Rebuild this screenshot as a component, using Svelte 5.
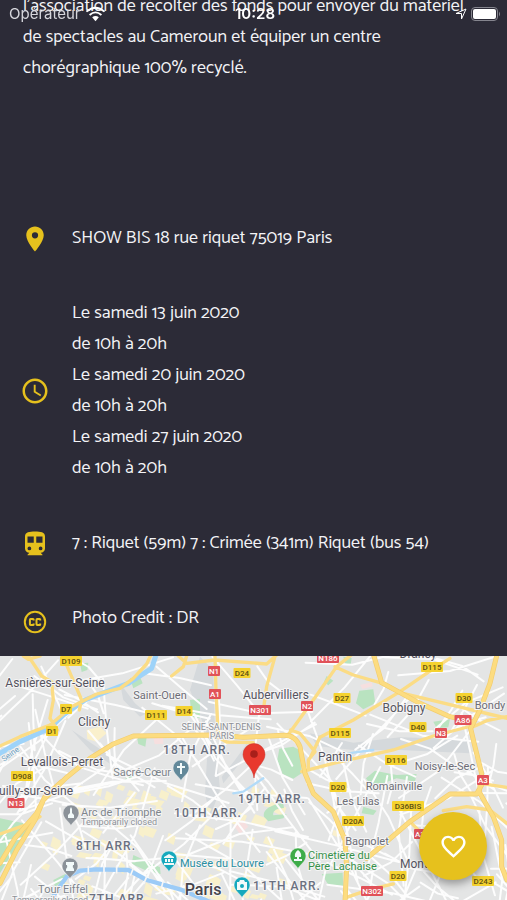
<script>
  const description =
    "l'association de récolter des fonds pour envoyer du matériel de spectacles au Cameroun et équiper un centre chorégraphique 100% recyclé.";

  const dates = ['Le samedi 13 juin 2020', 'Le samedi 20 juin 2020', 'Le samedi 27 juin 2020'];

  let liked = $state(false);

  // Minor streets: a repeatable scatter of long, slightly bent lines.
  function makeStreets(count) {
    let seed = 41;
    const rand = () => {
      seed = (seed * 16807) % 2147483647;
      return seed / 2147483647;
    };
    const list = [];
    for (let i = 0; i < count; i++) {
      const x = rand() * 1521;
      const y = rand() * 750;
      const dense = x < 1000 && y > 260;
      const angle = rand() * Math.PI;
      const len = dense ? 60 + rand() * 150 : 50 + rand() * 120;
      const bend = (rand() - 0.5) * 0.7;
      const mx = x + Math.cos(angle) * len;
      const my = y + Math.sin(angle) * len;
      const ex = mx + Math.cos(angle + bend) * len;
      const ey = my + Math.sin(angle + bend) * len;
      list.push(`M${x.toFixed()} ${y.toFixed()}L${mx.toFixed()} ${my.toFixed()}L${ex.toFixed()} ${ey.toFixed()}`);
    }
    return list.join('');
  }

  function makeBlocks(count) {
    let seed = 977;
    const rand = () => {
      seed = (seed * 16807) % 2147483647;
      return seed / 2147483647;
    };
    return Array.from({ length: count }, () => {
      const x = 120 + rand() * 720;
      const y = 400 + rand() * 340;
      const w = 12 + rand() * 28;
      const h = 10 + rand() * 20;
      return `M${x.toFixed()} ${y.toFixed()}l${w.toFixed()} ${(h / 2).toFixed()}l${(-w / 3).toFixed()} ${h.toFixed()}l${(-w).toFixed()} ${(-h / 2).toFixed()}z`;
    }).join('');
  }

  const streets = makeStreets(230);
  const blocks = makeBlocks(100);

  const parks = [
    'M0 505L50 515L95 525L60 580L30 620L0 670Z',
    'M838 296L880 290L898 300L905 370L880 386L848 372L832 330Z',
    'M400 615L480 652L482 672L440 662L395 642Z',
    'M792 500Q785 470 850 458L852 474Q815 476 820 496L860 492L850 505L805 514Z',
    'M965 672L1028 668L1030 708L985 704Z',
    'M1078 122L1120 118L1126 160L1090 178L1068 160Z',
    'M390 85L420 80L428 100L400 115Z',
    'M570 150L600 146L600 205L575 200Z',
    'M1098 385L1125 362L1190 375L1250 372L1245 395L1190 385L1150 400L1110 402Z',
    'M1030 20L1055 24L1052 46L1035 40Z',
    'M980 78L1000 92L985 106L972 95Z',
    'M410 258L440 262L436 290L415 282Z',
    'M240 40L265 38L262 60L245 66Z',
    'M1300 215L1350 208L1345 232L1310 234Z',
    'M1090 470L1130 482L1120 495L1085 490Z',
    'M160 690L200 670L195 690L165 710Z',
    'M380 372L400 376L392 396L376 390Z'
  ];

  const yards = [
    'M600 20L640 60L645 250L660 420L630 500L615 430L625 260L570 120Z',
    'M930 250L1060 278L1200 262L1400 268L1410 310L1200 300L1060 300L950 288Z',
    'M360 100L405 160L440 190L420 200L370 150Z',
    'M745 275L720 340L670 400L665 380L705 330Z',
    'M215 240L290 290L345 330L335 345L270 300Z'
  ];

  const roads = [
    'M0 288L60 260L150 225L215 170L290 132L360 115L400 85L440 42L455 10',
    'M85 18L125 78L155 96L160 150L150 205L172 240',
    'M188 18L215 80L245 150L238 180',
    'M120 18L85 28L70 18',
    'M535 18L560 40L645 30L800 42L830 15',
    'M515 78L550 50L560 18',
    'M825 20L800 110L790 180',
    'M645 18L648 120L655 262L680 276L760 278',
    'M1060 10L1010 50L940 150L868 250',
    'M1005 50L1060 75L1140 98',
    'M1350 25L1280 70L1200 125L1060 210L960 262L930 325',
    'M1140 98L1200 128L1521 205',
    'M1410 235L1460 212L1521 200',
    'M905 365L1000 340L1180 300L1300 258L1415 228',
    'M872 240L900 250L945 305L925 330L925 360',
    'M1230 515L1290 575',
    'M0 552L90 520L120 500',
    'M1330 482L1400 470L1470 480L1521 520',
    'M1040 742L1110 718L1180 702',
    'M1440 400L1521 412'
  ];

  const highways = [
    'M0 700L50 600L105 510L130 450L200 382L270 325L340 282L400 258L640 255L730 262L850 256Q885 254 900 290L915 370L940 430L1000 485L1035 570L1040 650L1035 760',
    'M0 640L45 565L110 490L135 440L185 395',
    'M1122 18L1145 98L1250 155L1350 200L1415 215',
    'M1492 10L1470 100L1440 180L1412 235L1425 290L1445 370L1438 425',
    'M1445 405L1430 432L1350 432L1230 515L1130 600L1100 625',
    'M1440 430L1480 500L1505 570L1505 650L1521 690'
  ];

  // Text, centre x, centre y, kind of road.
  const shields = [
    ['D109', 71, 5, 'd'], ['D7', 66, 53, 'd'], ['D1', 52, 75, 'd'], ['D908', 22, 120, 'd'],
    ['D24', 242, 17, 'd'], ['D111', 156, 59, 'd'], ['D14', 184, 55, 'd'],
    ['N1', 214, 15, 'n'], ['A1', 215, 38, 'n'], ['N301', 260, 54, 'n'], ['N2', 307, 50, 'n'],
    ['N186', 328, 2, 'n'], ['D27', 342, 42, 'd'], ['D115', 432, 11, 'd'], ['D30', 464, 42, 'd'],
    ['A86', 463, 64, 'n'], ['D40', 418, 71, 'd'], ['N3', 441, 77, 'n'], ['D115', 340, 77, 'd'],
    ['D116', 396, 104, 'd'], ['A3', 483, 124, 'n'], ['D20', 338, 131, 'd'], ['D36BIS', 408, 150, 'd'],
    ['D20A', 353, 165, 'd'], ['A3', 420, 178, 'n'], ['N13', 16, 147, 'n'], ['D20', 398, 220, 'd'],
    ['D243', 483, 225, 'd'], ['N302', 372, 235, 'n']
  ];

  // Text, x, baseline, style, anchor.
  const labels = [
    ['Asnières-sur-Seine', 55, 31, 'town', 'middle'],
    ['Clichy', 94, 70, 'town', 'middle'],
    ['Levallois-Perret', 62, 110, 'town', 'middle'],
    ['Neuilly-sur-Seine', 73, 139, 'town', 'end'],
    ['Aubervilliers', 276, 43, 'town', 'middle'],
    ['Bobigny', 404, 56, 'town', 'middle'],
    ['Pantin', 335, 105, 'town', 'middle'],
    ['Drancy', 418, 2, 'town', 'middle'],
    ['Montreuil', 400, 212, 'town', 'start'],
    ['Saint-Ouen', 160, 43, 'small', 'middle'],
    ['Bondy', 490, 53, 'small', 'middle'],
    ['Noisy-le-Sec', 445, 114, 'small', 'middle'],
    ['Romainville', 394, 134, 'small', 'middle'],
    ['Les Lilas', 358, 149, 'small', 'middle'],
    ['Bagnolet', 367, 189, 'small', 'middle'],
    ['SEINE-SAINT-DENIS', 221, 74, 'border', 'middle'],
    ['PARIS', 222, 83, 'border', 'middle'],
    ['18TH ARR.', 197, 98, 'district', 'middle'],
    ['19TH ARR.', 272, 147, 'district', 'middle'],
    ['10TH ARR.', 208, 161, 'district', 'middle'],
    ['8TH ARR.', 106, 194, 'district', 'middle'],
    ['11TH ARR.', 287, 234, 'district', 'middle'],
    ['7TH ARR.', 119, 247, 'district', 'middle'],
    ['Paris', 203, 239, 'city', 'middle'],
    ['Sacré-Cœur', 171, 120, 'sight', 'end'],
    ['Arc de Triomphe', 81, 160, 'sight', 'start'],
    ['Temporarily closed', 81, 169, 'note', 'start'],
    ['Tour Eiffel', 63, 237, 'sight', 'middle'],
    ['Temporarily closed', 88, 247, 'note', 'end'],
    ['Musée du Louvre', 180, 211, 'museum', 'start'],
    ['Cimetière du', 308, 203, 'garden', 'start'],
    ['Père Lachaise', 308, 214, 'garden', 'start']
  ];

  // Tip x, tip y, colour, glyph.
  const pins = [
    [181, 125, '#63899a', 'cross'],
    [71, 170, '#8b9299', 'tower'],
    [70, 223, '#8b9299', 'arch'],
    [169, 216, '#16a9bd', 'museum'],
    [298, 213, '#3eac49', 'tree'],
    [242, 242, '#16a9bd', 'camera']
  ];

  const glyphs = {
    cross: 'M-1-18h2v3h3v2h-3v6h-2v-6h-3v-2h3z',
    tower: 'M0-19l1 2v4l2 2v3h-6v-3l2-2v-4z',
    arch: 'M-4-17h8v3h-1q-1 2 1 4v2h-8v-2q2-2 1-4h-1z',
    museum: 'M0-18l5 3v1h-10v-1zM-4-13h2v3h-2zM-1-13h2v3h-2zM2-13h2v3h-2zM-5-9h10v2h-10z',
    tree: 'M0-19Q4-16 3-12H1v2H4v2H-4V-10H-1v-2H-3Q-4-16 0-19Z',
    camera: 'M-5-16h2l1-2h4l1 2h2v8h-10zM0-14a2 2 0 1 0 0 4a2 2 0 1 0 0-4z'
  };
</script>

<div class="status">
  <div class="carrier">
    <span>Opérateur</span>
    <svg width="21" height="16" viewBox="0 0 22 16" aria-hidden="true">
      <path d="M1.500 5.500Q11-2.800 20.500 5.500" /><path d="M4.800 9Q11 3.600 17.200 9" />
      <path class="solid" d="M7.500 11.500Q11 8.800 14.500 11.500L11 15.500Z" />
    </svg>
  </div>
  <time>10:28</time>
  <div class="power">
    <svg width="12" height="12" viewBox="0 0 12 12" aria-hidden="true">
      <path d="M1 5.500L11 1L6.500 11V5.500Z" />
    </svg>
    <svg width="30" height="14" viewBox="0 0 30 14" aria-hidden="true">
      <rect class="case" x=".5" y=".5" width="26" height="13" rx="3.500" />
      <rect class="solid" x="2" y="2" width="23" height="10" rx="2" />
      <path class="cap" d="M28 4.500Q30 7 28 9.500Z" />
    </svg>
  </div>
</div>

<main>
  <section class="details">
    <p class="description">{description}</p>

    <ul>
      <li>
        <svg class="icon" viewBox="0 0 24 24" aria-hidden="true">
          <path d="M12 2C8.130 2 5 5.130 5 9c0 5.250 7 13 7 13s7-7.750 7-13c0-3.870-3.130-7-7-7zm0 9.500a2.500 2.500 0 0 1 0-5 2.500 2.500 0 0 1 0 5z" />
        </svg>
        <p>SHOW BIS 18 rue riquet 75019 Paris</p>
      </li>
      <li>
        <svg class="icon" viewBox="0 0 24 24" aria-hidden="true">
          <path d="M11.990 2C6.470 2 2 6.480 2 12s4.470 10 9.990 10C17.520 22 22 17.520 22 12S17.520 2 11.990 2zM12 20c-4.420 0-8-3.580-8-8s3.580-8 8-8 8 3.580 8 8-3.580 8-8 8zm.5-13H11v6l5.250 3.150.75-1.230-4.500-2.670z" />
        </svg>
        <div>
          {#each dates as date}
            <p>{date}</p>
            <p>de 10h à 20h</p>
          {/each}
        </div>
      </li>
      <li>
        <svg class="icon" viewBox="0 0 24 24" aria-hidden="true">
          <path d="M12 2c-4.420 0-8 .5-8 4v9.500C4 17.430 5.570 19 7.500 19L6 20.500v.5h12v-.5L16.500 19c1.930 0 3.500-1.570 3.500-3.500V6c0-3.500-3.580-4-8-4zM7.500 17a1.500 1.500 0 0 1 0-3 1.500 1.500 0 0 1 0 3zm3.500-6H6V6h5v5zm5.500 6a1.500 1.500 0 0 1 0-3 1.500 1.500 0 0 1 0 3zm1.500-6h-5V6h5v5z" />
        </svg>
        <p>7 : Riquet (59m) 7 : Crimée (341m) Riquet (bus 54)</p>
      </li>
      <li>
        <svg class="icon line" viewBox="0 0 30 30" aria-hidden="true">
          <circle cx="15" cy="18" r="10.200" />
          <path d="M13.600 16.500V15.600Q13.600 15 13 15H10.600Q9.900 15 9.900 15.700V20.300Q9.900 21 10.600 21H13Q13.600 21 13.600 20.400V19.500M20.200 16.500V15.600Q20.200 15 19.600 15H17.200Q16.500 15 16.500 15.700V20.300Q16.500 21 17.200 21H19.600Q20.200 21 20.200 20.400V19.500" />
        </svg>
        <p>Photo Credit : DR</p>
      </li>
    </ul>
  </section>

  <svg class="map" viewBox="0 0 507 244" role="img" aria-label="SHOW BIS, Paris">
    <rect width="507" height="244" fill="#e4e5e5" />
    <g transform="translate(0 -6) scale(.3333)" fill="none" stroke-linejoin="round" stroke-linecap="round">
      <path d={yards.join('')} fill="#d5d9dc" />
      <path d={blocks} fill="#f8f0cb" />
      <path d="M260 240l40-10 20 20-30 25-28-8zM1000 540l25 5-8 18-20-8z" fill="#faf0cc" />
      <path d="M700 525l30-15 15 20-25 22zM1080 105l35-8 3 12-30 8zM460 265l30-2v18l-26 2z" fill="#f6dfdf" />
      <path d={parks.join('')} fill="#b9e3c0" />
      <path d={streets} stroke="#fdfdfd" stroke-width="6" />
      <path d="M470 10L455 55L385 100L320 125L255 150L190 195L150 235L60 275L0 310" stroke="#9ed3f9" stroke-width="15" />
      <path d="M145 760L200 680L240 662L290 658L385 660L440 690L540 718L640 760" stroke="#9ccbf7" stroke-width="13" />
      <path d="M700 430L730 425L790 385M1010 320L1060 308L1120 300" stroke="#b2dbf8" stroke-width="7" />
      <path d="M265 650v20M312 648v20M350 648v20M400 655l-8 20M440 680l-8 20M490 692l-6 22" stroke="#f7f7f7" stroke-width="5" />
      <path d={roads.join('')} stroke="#fbdc85" stroke-width="10" />
      <path d={highways.join('')} stroke="#f3cd6e" stroke-width="15" />
      <path d={highways.join('')} stroke="#fcdc80" stroke-width="11" />
    </g>

    {#each shields as [name, x, y, kind]}
      <rect class={kind} x={x - (name.length * 5 + 2) / 2} y={y - 5} width={name.length * 5 + 2} height="10" rx="1" />
      <text class="shield {kind}" {x} y={y + 3} text-anchor="middle">{name}</text>
    {/each}

    <text class="river" transform="translate(4 106) rotate(-36)">Seine</text>

    {#each labels as [name, x, y, style, anchor]}
      <text class={style} {x} {y} text-anchor={anchor}>{name}</text>
    {/each}

    {#each pins as [x, y, color, glyph]}
      <g transform="translate({x} {y})">
        <path d="M0 0C-1-4-8-7-8-13A8 8 0 1 1 8-13C8-7 1-4 0 0Z" fill={color} stroke="#f4f4f4" stroke-width=".5" />
        <path d={glyphs[glyph]} fill="#f2fafa" fill-rule="evenodd" />
      </g>
    {/each}

    <path d="M254 122C253 111 243 107 243 98.500A11 11 0 1 1 265 98.500C265 107 255 111 254 122Z" fill="#e8392e" stroke="#c8352c" stroke-width=".5" />
    <circle cx="254" cy="98" r="3.800" fill="#a81f1a" />
  </svg>
</main>

<button class="like" aria-label="Ajouter aux favoris" aria-pressed={liked} onclick={() => (liked = !liked)}>
  <svg width="29" height="29" viewBox="0 0 24 24" aria-hidden="true">
    <path d="M16.500 3c-1.740 0-3.410.81-4.500 2.090C10.910 3.810 9.240 3 7.500 3 4.420 3 2 5.420 2 8.500c0 3.780 3.400 6.860 8.550 11.540L12 21.350l1.450-1.320C18.600 15.360 22 12.280 22 8.500 22 5.420 19.580 3 16.500 3zm-4.400 15.550l-.1.100-.1-.1C7.140 14.240 4 11.390 4 8.500 4 6.500 5.500 5 7.500 5c1.540 0 3.040.99 3.570 2.360h1.870C13.460 5.990 14.960 5 16.500 5c2 0 3.500 1.500 3.500 3.500 0 2.890-3.140 5.740-7.900 10.050z" />
  </svg>
</button>

<style>
  :global(body) {
    margin: 0;
    background: #2c2b37;
  }

  main {
    overflow: hidden;
    color: #f3f3f6;
    font: 18px/31px Catamaran, Lato, 'Open Sans', sans-serif;
    font-variant-numeric: oldstyle-nums;
  }

  p,
  ul {
    margin: 0;
    padding: 0;
  }

  .details {
    padding: 0 20px 22px;
  }

  .description {
    margin: -9px 3px 139px;
  }

  ul {
    display: flex;
    flex-direction: column;
    gap: 44px;
    list-style: none;
  }

  li {
    display: flex;
    align-items: center;
    gap: 22px;
  }

  .icon {
    flex: none;
    width: 30px;
    height: 30px;
    fill: #e6c11d;
  }

  .line {
    fill: none;
    stroke: #e6c11d;
    stroke-width: 2;
  }

  .status {
    position: fixed;
    z-index: 2;
    inset: 0 0 auto;
    display: grid;
    grid-template-columns: 1fr auto 1fr;
    align-items: center;
    height: 27px;
    padding: 0 6px 0 9px;
    color: #d6d6dc;
    font: 15px/27px Inter, 'Liberation Sans', sans-serif;
  }

  .status svg {
    fill: none;
    stroke: #fff;
    stroke-width: 2;
  }

  .status time {
    color: #fff;
    font-weight: 600;
  }

  .carrier,
  .power {
    display: flex;
    align-items: center;
    gap: 4px;
  }

  .power {
    justify-content: flex-end;
  }

  .power svg:first-child {
    stroke-width: 1;
  }

  .status .solid {
    fill: #fff;
    stroke: none;
  }

  .status .case {
    stroke: #85858e;
    stroke-width: 1;
  }

  .status .cap {
    fill: #85858e;
    stroke: none;
  }

  .map {
    display: block;
    width: 100%;
    height: auto;
    font-family: Roboto, sans-serif;
    font-variant-numeric: normal;
  }

  .map text {
    paint-order: stroke;
    stroke: #f5f5f5;
    stroke-width: 2px;
    stroke-linejoin: round;
  }

  .map .town {
    fill: #56545f;
    font-size: 12px;
  }

  .map .small {
    fill: #6d6d76;
    font-size: 11px;
  }

  .map .border {
    fill: #8c8f96;
    font-size: 9px;
  }

  .map .district {
    fill: #6a7080;
    font-size: 12px;
    font-weight: 500;
    letter-spacing: 1px;
  }

  .map .city {
    fill: #44434b;
    font-size: 16px;
    font-weight: 500;
  }

  .map .sight {
    fill: #7e858c;
    font-size: 11px;
  }

  .map .note {
    fill: #8d9298;
    font-size: 9px;
  }

  .map .museum {
    fill: #2a8fa0;
    font-size: 11px;
  }

  .map .garden {
    fill: #37914a;
    font-size: 11px;
  }

  .map .river {
    fill: #6d9fc0;
    font-size: 8px;
  }

  .map .shield {
    stroke: none;
    font-size: 8px;
    font-weight: 500;
  }

  rect.d {
    fill: #f5d22f;
  }

  rect.n {
    fill: #e15259;
  }

  text.d {
    fill: #5d4f13;
  }

  text.n {
    fill: #fff;
  }

  .like {
    position: fixed;
    z-index: 2;
    right: 20px;
    bottom: 20px;
    display: grid;
    place-items: center;
    width: 68px;
    height: 68px;
    padding: 0;
    border: 0;
    border-radius: 50%;
    background: #e6c11d;
    box-shadow: 0 4px 8px rgb(0 0 0 / 35%);
    cursor: pointer;
  }

  .like svg {
    fill: #fff;
  }
</style>
